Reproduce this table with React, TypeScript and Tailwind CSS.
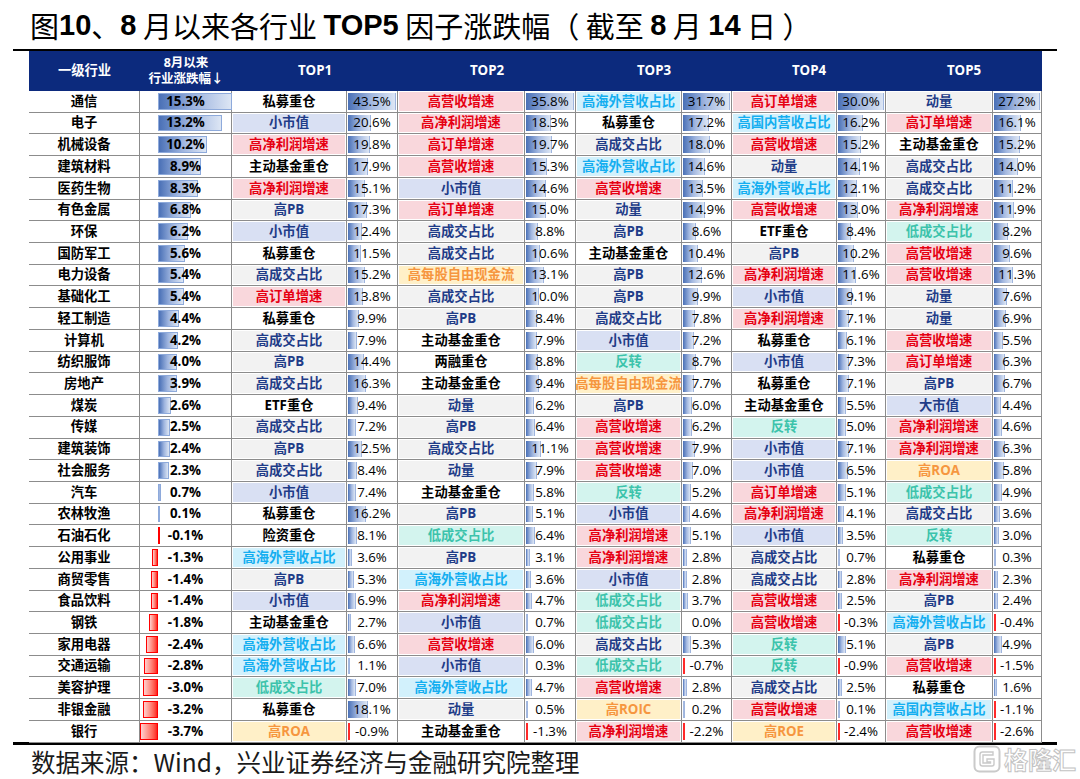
import React from "react";

type Cat = "black" | "navyBlue" | "red" | "navyGray" | "cyan" | "teal" | "orange";

const catOf: Record<string, Cat> = {
  私募重仓: "black",
  主动基金重仓: "black",
  ETF重仓: "black",
  两融重仓: "black",
  险资重仓: "black",
  小市值: "navyBlue",
  大市值: "navyBlue",
  高净利润增速: "red",
  高营收增速: "red",
  高订单增速: "red",
  高PB: "navyGray",
  高成交占比: "navyGray",
  动量: "navyGray",
  高海外营收占比: "cyan",
  高国内营收占比: "cyan",
  低成交占比: "teal",
  反转: "teal",
  高每股自由现金流: "orange",
  高ROA: "orange",
  高ROIC: "orange",
  高ROE: "orange",
};

const catClass: Record<Cat, string> = {
  black: "text-black bg-white",
  navyBlue: "text-[#1f3c88] bg-[#d9e0f3]",
  red: "text-[#e60012] bg-[#f9d7dc]",
  navyGray: "text-[#1f3c88] bg-[#f2f2f2]",
  cyan: "text-[#14aef0] bg-[#d2f1fc]",
  teal: "text-[#3cc3ab] bg-[#d3f4ee]",
  orange: "text-[#f6963f] bg-[#fff0c8]",
};

type Row = [string, number, string, number, string, number, string, number, string, number, string, number];

const rows: Row[] = [
  ["通信", 15.3, "私募重仓", 43.5, "高营收增速", 35.8, "高海外营收占比", 31.7, "高订单增速", 30.0, "动量", 27.2],
  ["电子", 13.2, "小市值", 20.6, "高净利润增速", 18.3, "私募重仓", 17.2, "高国内营收占比", 16.2, "高订单增速", 16.1],
  ["机械设备", 10.2, "高净利润增速", 19.8, "高订单增速", 19.7, "高成交占比", 18.0, "高营收增速", 15.2, "主动基金重仓", 15.2],
  ["建筑材料", 8.9, "主动基金重仓", 17.9, "高营收增速", 15.3, "高海外营收占比", 14.6, "动量", 14.1, "高成交占比", 14.0],
  ["医药生物", 8.3, "高净利润增速", 15.1, "小市值", 14.6, "高营收增速", 13.5, "高海外营收占比", 12.1, "高成交占比", 11.2],
  ["有色金属", 6.8, "高PB", 17.3, "高订单增速", 15.0, "动量", 14.9, "高营收增速", 13.0, "高净利润增速", 11.9],
  ["环保", 6.2, "小市值", 12.4, "高成交占比", 8.8, "高PB", 8.6, "ETF重仓", 8.4, "低成交占比", 8.2],
  ["国防军工", 5.6, "私募重仓", 11.5, "高成交占比", 10.6, "主动基金重仓", 10.4, "高PB", 10.2, "高营收增速", 9.6],
  ["电力设备", 5.4, "高成交占比", 15.2, "高每股自由现金流", 13.1, "高PB", 12.6, "高净利润增速", 11.6, "高营收增速", 11.3],
  ["基础化工", 5.4, "高订单增速", 13.8, "高成交占比", 10.0, "高PB", 9.9, "小市值", 9.1, "动量", 7.6],
  ["轻工制造", 4.4, "私募重仓", 9.9, "高PB", 8.4, "高成交占比", 7.8, "高净利润增速", 7.1, "动量", 6.9],
  ["计算机", 4.2, "高成交占比", 7.9, "主动基金重仓", 7.9, "小市值", 7.2, "私募重仓", 6.1, "高营收增速", 5.5],
  ["纺织服饰", 4.0, "高PB", 14.4, "两融重仓", 8.8, "反转", 8.7, "小市值", 7.3, "高订单增速", 6.3],
  ["房地产", 3.9, "高成交占比", 16.3, "主动基金重仓", 9.4, "高每股自由现金流", 7.7, "私募重仓", 7.1, "高PB", 6.7],
  ["煤炭", 2.6, "ETF重仓", 9.4, "动量", 6.2, "高PB", 6.0, "主动基金重仓", 5.5, "大市值", 4.4],
  ["传媒", 2.5, "高成交占比", 7.2, "高PB", 6.4, "高营收增速", 6.2, "反转", 5.0, "高净利润增速", 4.6],
  ["建筑装饰", 2.4, "高PB", 12.5, "高成交占比", 11.1, "高营收增速", 7.9, "小市值", 7.1, "高净利润增速", 6.3],
  ["社会服务", 2.3, "高成交占比", 8.4, "动量", 7.9, "高营收增速", 7.0, "小市值", 6.5, "高ROA", 5.8],
  ["汽车", 0.7, "小市值", 7.4, "主动基金重仓", 5.8, "反转", 5.2, "高订单增速", 5.1, "低成交占比", 4.9],
  ["农林牧渔", 0.1, "私募重仓", 16.2, "高PB", 5.1, "小市值", 4.6, "高净利润增速", 4.1, "高成交占比", 3.6],
  ["石油石化", -0.1, "险资重仓", 8.1, "低成交占比", 6.4, "高净利润增速", 5.1, "小市值", 3.5, "反转", 3.0],
  ["公用事业", -1.3, "高海外营收占比", 3.6, "高PB", 3.1, "高净利润增速", 2.8, "高成交占比", 0.7, "私募重仓", 0.3],
  ["商贸零售", -1.4, "高PB", 5.3, "高海外营收占比", 3.6, "小市值", 2.8, "高成交占比", 2.8, "高净利润增速", 2.3],
  ["食品饮料", -1.4, "小市值", 6.9, "高净利润增速", 4.7, "低成交占比", 3.7, "高营收增速", 2.5, "高PB", 2.4],
  ["钢铁", -1.8, "主动基金重仓", 2.7, "小市值", 0.7, "低成交占比", 0.0, "高营收增速", -0.3, "高海外营收占比", -0.4],
  ["家用电器", -2.4, "高海外营收占比", 6.6, "高营收增速", 6.0, "高成交占比", 5.3, "反转", 5.1, "高PB", 4.9],
  ["交通运输", -2.8, "高海外营收占比", 1.1, "小市值", 0.3, "低成交占比", -0.7, "反转", -0.9, "高营收增速", -1.5],
  ["美容护理", -3.0, "低成交占比", 7.0, "高海外营收占比", 4.7, "高营收增速", 2.8, "高成交占比", 2.5, "私募重仓", 1.6],
  ["非银金融", -3.2, "私募重仓", 18.1, "动量", 0.5, "高ROIC", 0.2, "高营收增速", 0.1, "高国内营收占比", -1.1],
  ["银行", -3.7, "高ROA", -0.9, "主动基金重仓", -1.3, "高净利润增速", -2.2, "高ROE", -2.4, "高营收增速", -2.6],
];

// widths of the five percent columns
const pctWidths = [51, 51, 50, 49, 49];

const colMax = [0, 1, 2, 3, 4].map((k) =>
  Math.max(...rows.map((r) => r[3 + k * 2] as number))
);

const fmt = (v: number) => `${v.toFixed(1)}%`;

function IndustryBar({ v }: { v: number }) {
  const pos = v >= 0;
  const w = Math.abs(v) * 4.84;
  return (
    <div className="relative h-full border-r border-b border-[#8c8c8c] flex items-center justify-center">
      {pos ? (
        <div
          className="absolute left-[18px] top-[2px] bottom-[2px] bg-gradient-to-r from-[#4a70b6] via-[#9fb5df] to-[#dde6f4] border border-[#8eaadb]"
          style={{ width: w }}
        />
      ) : (
        <div
          className="absolute top-[2px] bottom-[2px] bg-gradient-to-l from-[#ff1a1a] to-[#ffd0d0] border border-[#ff0000]"
          style={{ width: w, left: 18 - w }}
        />
      )}
      <span className="relative font-bold">{fmt(v)}</span>
    </div>
  );
}

function PctCell({ v, k }: { v: number; k: number }) {
  const full = pctWidths[k] - 3;
  const w = v > 0 ? Math.max(2, (v / colMax[k]) * full) : 0;
  return (
    <div className="relative h-full border-r border-b border-[#8c8c8c] flex items-center justify-center">
      {v > 0 && (
        <div
          className="absolute left-px top-[2px] bottom-[2px] bg-gradient-to-r from-[#4a70b6] via-[#a3b8e0] to-[#dde6f4] border-r border-[#9fb5de]"
          style={{ width: w }}
        />
      )}
      {v < 0 && (
        <div className="absolute left-px top-[2px] bottom-[2px] w-[2px] bg-[#ff2a2a]" />
      )}
      <span className="relative">{fmt(v)}</span>
    </div>
  );
}

function NameCell({ name }: { name: string }) {
  return (
    <div className="h-full border-r border-b border-[#8c8c8c] p-px overflow-hidden">
      <div
        className={`h-full flex items-center justify-center whitespace-nowrap font-bold ${catClass[catOf[name]]}`}
      >
        {name}
      </div>
    </div>
  );
}

function Watermark() {
  return (
    <div className="absolute right-[4px] bottom-[6px] flex items-center gap-[3px] opacity-80">
      <svg width="28" height="28" viewBox="0 0 28 28" fill="none">
        <rect x="1.5" y="1.5" width="25" height="25" rx="5" stroke="#bdbdbd" strokeWidth="2" />
        <path
          d="M20 7H9.5C8.1 7 7 8.1 7 9.5v9C7 19.9 8.1 21 9.5 21H19c1.1 0 2-.9 2-2v-5h-7v3h3.5v1H10V10h10z"
          stroke="#bdbdbd"
          strokeWidth="1.4"
          fill="white"
        />
      </svg>
      <span className="text-[24px] leading-none font-bold text-white [-webkit-text-stroke:1px_#b5b5b5] font-['Noto_Sans_CJK_SC',sans-serif]">
        格隆汇
      </span>
    </div>
  );
}

const latin = "font-['Liberation_Sans',sans-serif] font-bold";

export default function App() {
  return (
    <div className="relative w-[1080px] h-[779px] bg-white overflow-hidden text-black">
      {/* Title */}
      <h1 className="h-[49px] flex items-center pl-[30px] pt-[2px] text-[29px] leading-none whitespace-nowrap font-['Noto_Sans_CJK_SC',sans-serif] font-normal">
        图<b className={latin}>10</b>、<b className={latin}>8</b>&nbsp;月以来各行业&nbsp;
        <b className={latin}>TOP5</b>&nbsp;因子涨跌幅（&nbsp;截至&nbsp;<b className={latin}>8</b>&nbsp;月&nbsp;
        <b className={latin}>14</b>&nbsp;日&nbsp;）
      </h1>
      <div className="ml-[13px] w-[1044px] h-[2px] bg-black" />

      {/* Table */}
      <div className="ml-[29px] w-[1013px] font-['Open_Sans','Noto_Sans_CJK_SC',sans-serif] text-[13.3px] leading-none">
        <div className="grid grid-cols-[111px_92px_166px_178px_156px_154px_156px] h-[40px] bg-[#0c2a7d] text-white font-bold">
          <div className="flex items-center justify-center">一级行业</div>
          <div className="flex flex-col items-center justify-center text-[12.5px] leading-[16px]">
            <span>8月以来</span>
            <span>行业涨跌幅↓</span>
          </div>
          <div className="flex items-center justify-center">TOP1</div>
          <div className="flex items-center justify-center">TOP2</div>
          <div className="flex items-center justify-center">TOP3</div>
          <div className="flex items-center justify-center">TOP4</div>
          <div className="flex items-center justify-center">TOP5</div>
        </div>

        <div className="grid grid-cols-[111px_92px_115px_51px_127px_51px_106px_50px_105px_49px_107px_49px] auto-rows-[21.73px]">
          {rows.map((r) => (
            <React.Fragment key={r[0]}>
              <div className="h-full border-r border-b border-[#8c8c8c] flex items-center justify-center font-bold">
                {r[0]}
              </div>
              <IndustryBar v={r[1]} />
              {[0, 1, 2, 3, 4].map((k) => (
                <React.Fragment key={k}>
                  <NameCell name={r[2 + k * 2] as string} />
                  <PctCell v={r[3 + k * 2] as number} k={k} />
                </React.Fragment>
              ))}
            </React.Fragment>
          ))}
        </div>
      </div>
      <div className="ml-[13px] w-[1044px] h-[3px] bg-black -mt-px" />

      {/* Footer */}
      <div className="pl-[31px] pt-[3px] h-[33px] flex items-center text-[24.5px] leading-none text-[#1a1a1a] whitespace-nowrap font-['Noto_Sans_CJK_SC',sans-serif]">
        数据来源：Wind，兴业证券经济与金融研究院整理
      </div>

      <Watermark />
    </div>
  );
}
